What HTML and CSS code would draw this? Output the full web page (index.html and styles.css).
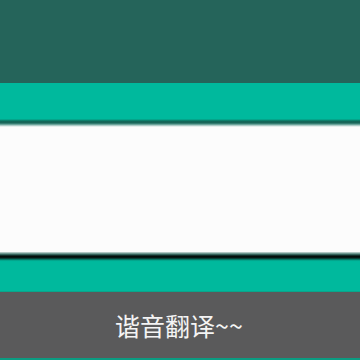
FILE: index.html
```html
<!DOCTYPE html>
<html lang="zh">
<head>
<meta charset="utf-8">
<link rel="stylesheet" href="styles.css">
</head>
<body>
<div class="screen">
  <div class="statusbar"></div>
  <div class="band band-top"></div>
  <div class="panel"></div>
  <div class="band band-bottom"></div>
  <div class="footer"><span class="footer-text">谐音翻译~~</span></div>
  <div class="edge"></div>
</div>
</body>
</html>
```
FILE: styles.css
```css
html, body {
  margin: 0;
  padding: 0;
  background: #5a5a5b;
}
.screen {
  width: 360px;
  height: 360px;
  display: flex;
  flex-direction: column;
  overflow: hidden;
}
.statusbar {
  height: 83px;
  background: #25645a;
}
.band-top {
  height: 44px;
  background: linear-gradient(to bottom,
    #00b99d 0px, #00b99d 36px,
    #0a8f78 37px, #10705f 38px, #135f52 39px,
    #1d6b5e 40px, #4a8e83 41px, #8ab8b1 42px, #cfe0dd 43px, #fbfbfb 44px);
}
.panel {
  height: 125px;
  background: #fcfcfc;
}
.band-bottom {
  height: 40px;
  background: linear-gradient(to bottom,
    #d2dedc 0px, #8fb0aa 1px, #4d7f76 2px, #1e4640 3px,
    #061612 4px, #020706 5px, #0a2a24 6px, #08594b 7px,
    #05957e 8px, #00b59a 9px, #00b99d 10px, #00b99d 39px, #129479 40px);
}
.footer {
  height: 66px;
  background: #5a5a5b;
  display: flex;
  align-items: center;
  justify-content: center;
}
.footer-text {
  color: #f4f4f4;
  font-family: "Noto Sans CJK SC", "Noto Sans", sans-serif;
  font-size: 25px;
  line-height: 1;
  margin-left: -2px;
}
.edge {
  height: 2px;
  background: #0a9c82;
}
```
